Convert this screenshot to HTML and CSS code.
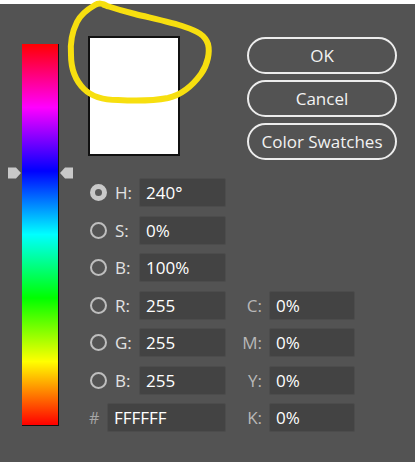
FILE: index.html
```html
<!DOCTYPE html>
<html lang="en">
<head>
    <meta charset="UTF-8">
    <meta name="viewport" content="width=device-width, initial-scale=1.0">
    <title>Color Picker</title>
    <link rel="stylesheet" href="styles.css">
</head>
<body>
    <div class="topbar"></div>

    <div class="dialog">
        <!-- hue slider -->
        <div class="hue">
            <div class="hue-bar"></div>
            <svg class="hue-arrow left" width="14" height="12" viewBox="0 0 14 12">
                <polygon points="0,0.5 8,0.5 13,6 8,11.5 0,11.5" fill="#c9c9c9"/>
            </svg>
            <svg class="hue-arrow right" width="14" height="12" viewBox="0 0 14 12">
                <polygon points="14,0.5 6,0.5 1,6 6,11.5 14,11.5" fill="#c9c9c9"/>
            </svg>
        </div>

        <div class="main">
            <div class="top-row">
                <div class="preview"></div>
                <div class="actions">
                    <button class="pill">OK</button>
                    <button class="pill">Cancel</button>
                    <button class="pill">Color Swatches</button>
                </div>
            </div>

            <div class="fields">
                <span class="radio checked"></span><label>H:</label><div class="field">240°</div>
                <span></span><span></span>

                <span class="radio"></span><label>S:</label><div class="field">0%</div>
                <span></span><span></span>

                <span class="radio"></span><label>B:</label><div class="field">100%</div>
                <span></span><span></span>

                <span class="radio"></span><label>R:</label><div class="field">255</div>
                <label class="cmyk">C:</label><div class="field">0%</div>

                <span class="radio"></span><label>G:</label><div class="field">255</div>
                <label class="cmyk">M:</label><div class="field">0%</div>

                <span class="radio"></span><label>B:</label><div class="field">255</div>
                <label class="cmyk">Y:</label><div class="field">0%</div>

                <div class="hex"><span class="hash">#</span><div class="field">FFFFFF</div></div>
                <label class="cmyk">K:</label><div class="field">0%</div>
            </div>
        </div>
    </div>

    <!-- highlighter scribble on top of the dialog -->
    <svg class="scribble" width="415" height="462" viewBox="0 0 415 462">
        <path d="M107,6 C103,3 98,3 95,5 C88,9 81,14 77,22 C72,32 70,43 71,55
                 C71,69 76,81 84,89 C92,97 104,100 118,100 C135,101 152,101 168,98
                 C181,95 193,85 201,74 C208,64 210,52 208,44 C205,35 197,31 185,27
                 C171,22 151,18 135,14 C123,11 113,8 104,5"
              fill="none" stroke="#f7df0f" stroke-width="6" stroke-linecap="round" stroke-linejoin="round"/>
    </svg>
</body>
</html>
```

FILE: styles.css
```css
body {
    margin: 0;
    background-color: #535353;
    font-family: "Open Sans", "Noto Sans", sans-serif;
    color: #e2e2e2;
    height: 462px;
    overflow: hidden;
}
.topbar {
    height: 4px;
    background-color: #fff;
}
.dialog {
    display: flex;
    padding: 32px 0 0 10px;
}
.hue {
    position: relative;
    width: 61px;
    height: 382px;
    margin-top: 8px;
}
.hue-bar {
    box-sizing: border-box;
    width: 37px;
    height: 382px;
    margin-left: 12px;
    border-right: 1px solid #111;
    border-bottom: 1px solid #111;
    background: linear-gradient(to bottom, #f00 0%, #f0f 16.67%, #00f 33.33%, #0ff 50%, #0f0 66.67%, #ff0 83.33%, #f00 100%);
}
.hue-arrow {
    position: absolute;
    top: 123px;
}
.hue-arrow.left {
    left: -2px;
}
.hue-arrow.right {
    left: 49px;
}
.main {
    margin-left: 17px;
}
.top-row {
    display: flex;
    align-items: flex-start;
    height: 120px;
}
.preview {
    box-sizing: border-box;
    width: 92px;
    height: 120px;
    background-color: #fff;
    border: 2px solid #111;
}
.actions {
    display: flex;
    flex-direction: column;
    gap: 6px;
    margin: 1px 0 0 67px;
}
.pill {
    box-sizing: border-box;
    width: 150px;
    height: 37px;
    border: 2px solid #ececec;
    border-radius: 19px;
    background: transparent;
    color: #f2f2f2;
    font-family: inherit;
    font-size: 17px;
    padding: 0;
}
.fields {
    display: grid;
    grid-template-columns: 27px 24px 87px 43px 86px;
    grid-auto-rows: 29px;
    row-gap: 8.5px;
    margin-top: 22px;
    align-items: center;
}
.fields label {
    font-size: 17px;
    line-height: 29px;
}
.fields .cmyk {
    text-align: right;
    padding-right: 7px;
    color: #b8b8b8;
}
.radio {
    box-sizing: border-box;
    width: 17px;
    height: 17px;
    margin-left: 2px;
    border-radius: 50%;
    border: 2px solid #bebebe;
}
.radio.checked {
    border: 5.5px solid #c9c9c9;
    background-color: #5a5a5a;
}
.field {
    box-sizing: border-box;
    height: 29px;
    padding: 0 6px;
    background-color: #434343;
    border: 1px solid #4c4c4c;
    border-radius: 2px;
    color: #fff;
    font-size: 17px;
    line-height: 27px;
}
.hex {
    grid-column: span 3;
    display: flex;
    align-items: center;
}
.hex .hash {
    width: 19px;
    padding-left: 1px;
    box-sizing: border-box;
    color: #a6a6a6;
    font-size: 16px;
}
.hex .field {
    flex: 1;
}
.scribble {
    position: absolute;
    top: 0;
    left: 0;
    pointer-events: none;
}
```
